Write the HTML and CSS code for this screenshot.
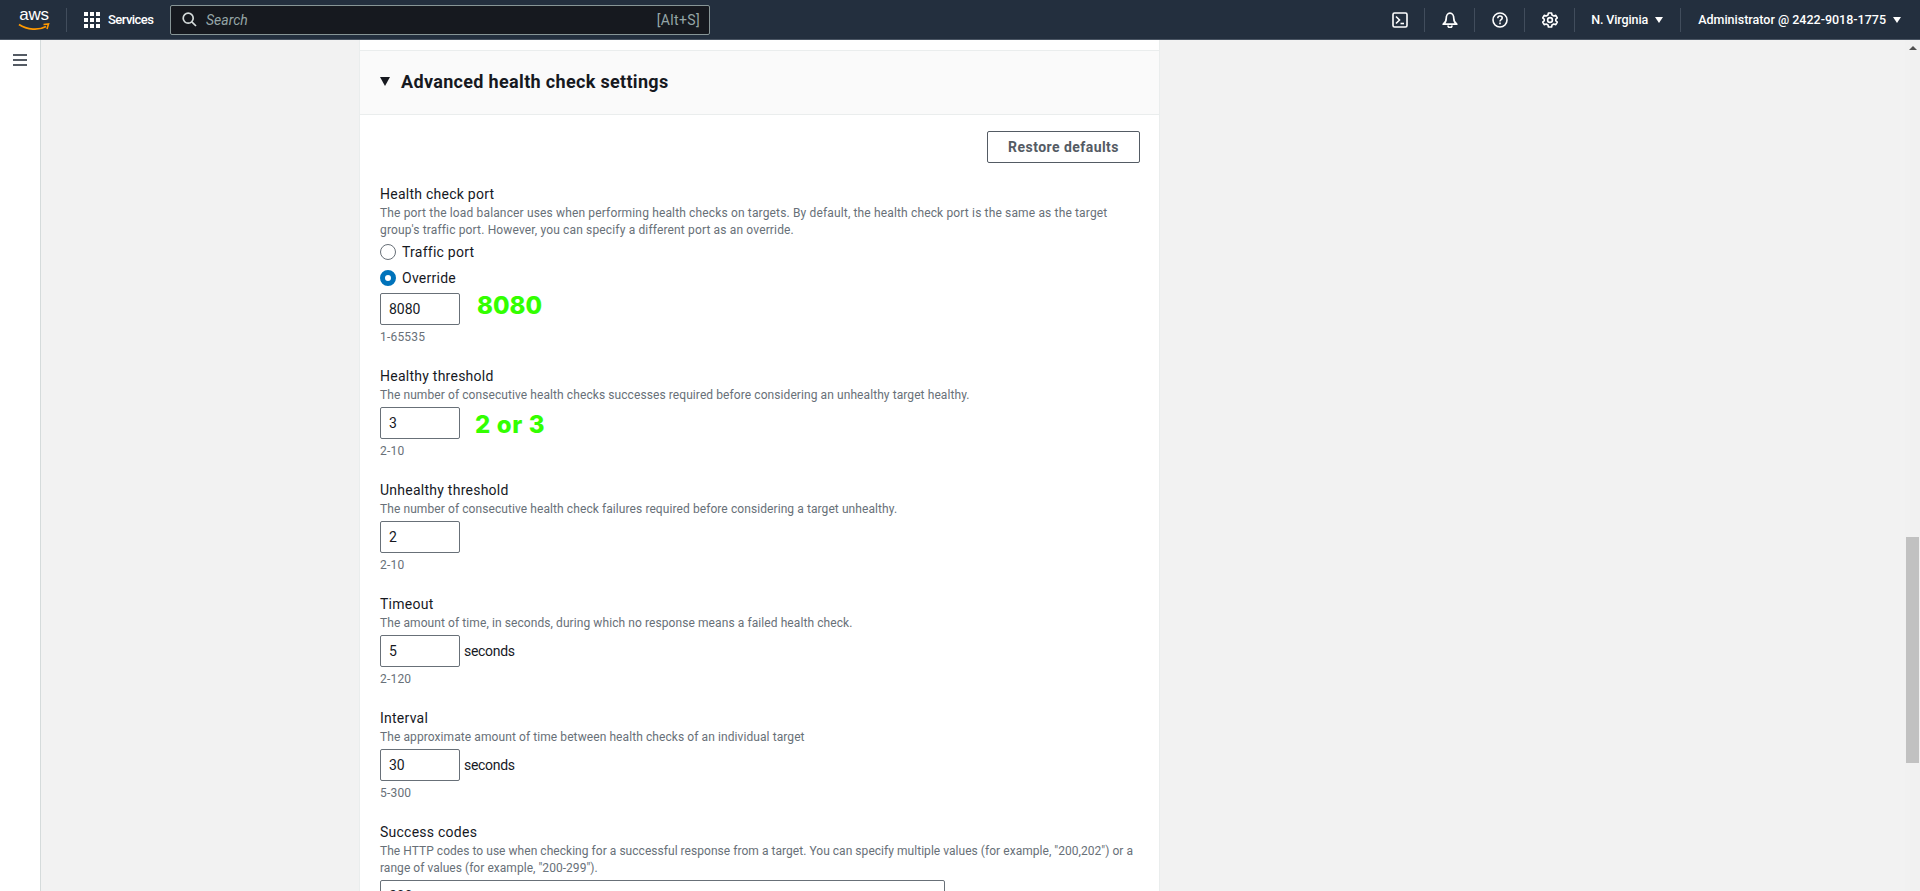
FILE: index.html
```html
<!DOCTYPE html>
<html lang="en">
<head>
<meta charset="utf-8">
<title>Advanced health check settings</title>
<link rel="stylesheet" href="styles.css">
</head>
<body>
<header class="topbar">
  <div class="logo">
    <span class="logo-text">aws</span>
    <svg class="logo-smile" width="32" height="8" viewBox="0 0 32 8"><path d="M1 1.5C9 7 21 7.5 28 3.5" fill="none" stroke="#f90" stroke-width="1.8"/><path d="M25.5 1.5L30.5 1L29 6" fill="none" stroke="#f90" stroke-width="1.6"/></svg>
  </div>
  <span class="top-div div-logo"></span>
  <svg class="grid-icon" width="16" height="16" viewBox="0 0 16 16" fill="#fff"><rect width="4" height="4"/><rect x="6" width="4" height="4"/><rect x="12" width="4" height="4"/><rect y="6" width="4" height="4"/><rect x="6" y="6" width="4" height="4"/><rect x="12" y="6" width="4" height="4"/><rect y="12" width="4" height="4"/><rect x="6" y="12" width="4" height="4"/><rect x="12" y="12" width="4" height="4"/></svg>
  <span class="services">Services</span>
  <div class="search">
    <svg class="search-icon" width="15" height="15" viewBox="0 0 15 15" fill="none" stroke="#d5dbdb" stroke-width="1.7"><circle cx="6.2" cy="6.2" r="5"/><path d="M9.8 9.8L14 14"/></svg>
    <span class="search-text">Search</span>
    <span class="search-key">[Alt+S]</span>
  </div>
  <div class="top-right">
    <svg class="top-icon" width="16" height="16" viewBox="0 0 16 16" fill="none" stroke="#fff" stroke-width="1.6"><rect x="1" y="1" width="14" height="14" rx="1.5"/><path d="M4 4.5L7.5 8L4 11.5"/><path d="M8.5 11.5H12"/></svg>
    <span class="top-div"></span>
    <svg class="top-icon" width="16" height="16" viewBox="0 0 16 16" fill="none" stroke="#fff" stroke-width="1.7"><path d="M1.2 12.2C3 11 4.2 9.5 4.2 6.5C4.2 3.6 5.8 1.2 8 1.2C10.2 1.2 11.8 3.6 11.8 6.5C11.8 9.5 13 11 14.8 12.2Z" stroke-linejoin="round"/><path d="M6 13.5a2 2 0 0 0 4 0"/></svg>
    <span class="top-div"></span>
    <svg class="top-icon" width="16" height="16" viewBox="0 0 16 16" fill="none" stroke="#fff" stroke-width="1.6"><circle cx="8" cy="8" r="7"/><path d="M5.8 6.2C5.8 4.8 6.8 4 8 4C9.3 4 10.2 4.9 10.2 6C10.2 7.6 8 7.6 8 9.4"/><path d="M8 10.6V12.2"/></svg>
    <span class="top-div"></span>
    <svg class="top-icon" width="16" height="16" viewBox="0 0 16 16" fill="none" stroke="#fff" stroke-width="1.6"><path d="M6.4 1H9.6L10 3L11.8 4L13.8 3.3L15.3 6L13.8 7.2V8.8L15.3 10L13.8 12.7L11.8 12L10 13L9.6 15H6.4L6 13L4.2 12L2.2 12.7L.7 10L2.2 8.8V7.2L.7 6L2.2 3.3L4.2 4L6 3Z" stroke-linejoin="round"/><circle cx="8" cy="8" r="2.4"/></svg>
    <span class="top-div"></span>
    <span class="menu-text region">N. Virginia</span>
    <span class="caret-down"></span>
    <span class="top-div"></span>
    <span class="menu-text account">Administrator @ 2422-9018-1775</span>
    <span class="caret-down"></span>
  </div>
</header>
<div class="shell">
  <nav class="sidenav">
    <div class="hamburger"><span></span><span></span><span></span></div>
  </nav>
  <main class="main">
    <section class="panel">
      <div class="panel-top"></div>
      <div class="panel-head">
        <span class="expand-caret"></span>
        <h2 class="panel-title">Advanced health check settings</h2>
      </div>
      <div class="panel-body">
        <div class="actions"><button class="btn" type="button">Restore defaults</button></div>

        <div class="field">
          <div class="label">Health check port</div>
          <div class="desc desc-loose">The port the load balancer uses when performing health checks on targets. By default, the health check port is the same as the target group's traffic port. However, you can specify a different port as an override.</div>
          <div class="radios">
            <div class="radio-row"><span class="radio"></span><span class="radio-label">Traffic port</span></div>
            <div class="radio-row"><span class="radio checked"></span><span class="radio-label">Override</span></div>
          </div>
          <div class="input-row input-row-tight"><div class="input">8080</div><span class="note note-port">8080</span></div>
          <div class="hint">1-65535</div>
        </div>

        <div class="field">
          <div class="label">Healthy threshold</div>
          <div class="desc">The number of consecutive health checks successes required before considering an unhealthy target healthy.</div>
          <div class="input-row"><div class="input">3</div><span class="note note-threshold">2 or 3</span></div>
          <div class="hint">2-10</div>
        </div>

        <div class="field">
          <div class="label">Unhealthy threshold</div>
          <div class="desc">The number of consecutive health check failures required before considering a target unhealthy.</div>
          <div class="input-row"><div class="input">2</div></div>
          <div class="hint">2-10</div>
        </div>

        <div class="field">
          <div class="label">Timeout</div>
          <div class="desc">The amount of time, in seconds, during which no response means a failed health check.</div>
          <div class="input-row"><div class="input">5</div><span class="unit">seconds</span></div>
          <div class="hint">2-120</div>
        </div>

        <div class="field">
          <div class="label">Interval</div>
          <div class="desc">The approximate amount of time between health checks of an individual target</div>
          <div class="input-row"><div class="input">30</div><span class="unit">seconds</span></div>
          <div class="hint">5-300</div>
        </div>

        <div class="field">
          <div class="label">Success codes</div>
          <div class="desc desc-tight">The HTTP codes to use when checking for a successful response from a target. You can specify multiple values (for example, "200,202") or a range of values (for example, "200-299").</div>
          <div class="input-row"><div class="input input-wide">200</div></div>
        </div>
      </div>
    </section>
  </main>
  <aside class="scrollbar">
    <span class="scroll-up"></span>
    <span class="scroll-thumb"></span>
  </aside>
</div>
</body>
</html>
```
FILE: styles.css
```css
* { box-sizing: border-box; }
html, body { height: 100%; margin: 0; }
body {
  display: flex;
  flex-direction: column;
  overflow: hidden;
  font-family: Roboto, "Open Sans", sans-serif;
  font-size: 14px;
  color: #16191f;
  background: #f2f2f2;
}

/* top bar */
.topbar {
  flex: none;
  height: 40px;
  display: flex;
  align-items: center;
  padding-left: 18px;
  background: #232f3e;
  border-bottom: 1px solid #4a5563;
  color: #fff;
}
.logo {
  width: 32px;
  height: 24px;
  display: flex;
  flex-direction: column;
  align-items: center;
  margin-top: -2px;
}
.logo-text {
  font-family: "Liberation Sans", sans-serif;
  font-size: 17px;
  line-height: 16px;
  letter-spacing: -0.2px;
  color: #fff;
}
.logo-smile { display: block; margin-top: 0; }
.top-div { width: 1px; height: 24px; background: #414d5c; flex: none; }
.div-logo { margin-left: 16px; margin-right: 17px; }
.grid-icon { flex: none; }
.services { margin-left: 8px; width: 62px; font-size: 13px; font-weight: 500; letter-spacing: -0.55px; }
.search {
  width: 540px;
  height: 30px;
  display: flex;
  align-items: center;
  padding: 0 9px 0 11px;
  background: #16191f;
  border: 1px solid #879596;
  border-radius: 2px;
}
.search-icon { flex: none; }
.search-text { margin-left: 9px; font-size: 14px; font-style: italic; color: #95a5a6; }
.search-key { margin-left: auto; font-size: 14px; letter-spacing: 0.35px; color: #95a5a6; }
.top-right { margin-left: auto; display: flex; align-items: center; padding-right: 19px; }
.top-icon { flex: none; margin: 0 16px 0 17px; }
.menu-text { font-size: 12.5px; font-weight: 500; white-space: nowrap; color: #fff; }
.region { margin-left: 16px; letter-spacing: -0.1px; }
.region + .caret-down { margin-right: 17px; }
.account { margin-left: 17px; }
.caret-down {
  margin: 0 18px 0 7px;
  width: 0;
  height: 0;
  border-left: 4px solid transparent;
  border-right: 4px solid transparent;
  border-top: 6px solid #fff;
}
.account + .caret-down { margin-right: 0; }

/* shell */
.shell { flex: 1; min-height: 0; display: flex; }
.sidenav {
  flex: none;
  width: 41px;
  background: #fff;
  border-right: 1px solid #d5dbdb;
  padding: 14px 0 0 13px;
}
.hamburger { width: 14px; display: flex; flex-direction: column; gap: 3px; }
.hamburger span { display: block; height: 2px; background: #545b64; }
.main { flex: 1; min-width: 0; overflow: hidden; padding-left: 318px; }

/* panel */
.panel {
  width: 801px;
  background: #fff;
  border-left: 1px solid #eaeded;
  border-right: 1px solid #eaeded;
}
.panel-top { height: 10px; }
.panel-head {
  height: 65px;
  display: flex;
  align-items: center;
  padding: 0 0 2px 20px;
  background: #fafafa;
  border-top: 1px solid #eaeded;
  border-bottom: 1px solid #eaeded;
}
.expand-caret {
  width: 0;
  height: 0;
  border-left: 5.5px solid transparent;
  border-right: 5.5px solid transparent;
  border-top: 9px solid #16191f;
}
.panel-title { margin: 0 0 0 11px; font-size: 18px; line-height: 22px; font-weight: 700; letter-spacing: 0.33px; color: #16191f; }
.panel-body { padding: 16px 19px 0 20px; }
.actions { display: flex; justify-content: flex-end; margin-bottom: 21px; }
.btn {
  width: 153px;
  height: 32px;
  padding: 0;
  background: #fff;
  border: 1px solid #545b64;
  border-radius: 2px;
  font: 700 14px Roboto, sans-serif;
  letter-spacing: 0.45px;
  color: #545b64;
}
.field { margin-bottom: 21px; }
.label { font-size: 14px; line-height: 20px; letter-spacing: 0.25px; color: #16191f; }
.desc { padding-top: 1px; margin-bottom: -1px; font-size: 12px; line-height: 17px; letter-spacing: 0.085px; color: #687078; }
.desc-loose { letter-spacing: 0.15px; }
.desc-tight { letter-spacing: 0.04px; }
.radios { padding-top: 1px; }
.radio-row { height: 26px; display: flex; align-items: center; }
.radio {
  width: 16px;
  height: 16px;
  border-radius: 50%;
  border: 1px solid #687078;
  background: #fff;
}
.radio.checked { border: 5px solid #0073bb; }
.radio-label { margin-left: 6px; font-size: 14px; line-height: 20px; letter-spacing: 0.25px; }
.input-row { display: flex; align-items: center; margin-top: 4px; height: 32px; }
.input-row-tight { margin-top: 2px; }
.input {
  flex: none;
  width: 80px;
  height: 32px;
  line-height: 30px;
  padding-left: 8px;
  border: 1px solid #687078;
  border-radius: 2px;
  background: #fff;
  font-size: 14px;
  color: #16191f;
}
.input-wide { width: 565px; }
.unit { margin-left: 4px; font-size: 14px; letter-spacing: -0.3px; color: #16191f; }
.hint { margin-top: 4px; font-size: 12px; line-height: 16px; letter-spacing: 0.2px; color: #687078; }
.note { font-family: Inter, sans-serif; font-weight: 800; color: #33ff00; line-height: 30px; }
.note-port { margin: -7px 0 0 17px; font-size: 24px; }
.note-threshold { margin: 4px 0 0 15px; font-size: 24px; letter-spacing: 0.6px; }

/* scrollbar */
.scrollbar {
  flex: none;
  width: 15px;
  background: #f1f1f1;
  display: flex;
  flex-direction: column;
  align-items: center;
}
.scroll-up {
  margin-top: 6px;
  width: 0;
  height: 0;
  border-left: 4px solid transparent;
  border-right: 4px solid transparent;
  border-bottom: 4px solid #505050;
}
.scroll-thumb { margin-top: 487px; width: 13px; height: 226px; background: #c1c1c1; }
```
